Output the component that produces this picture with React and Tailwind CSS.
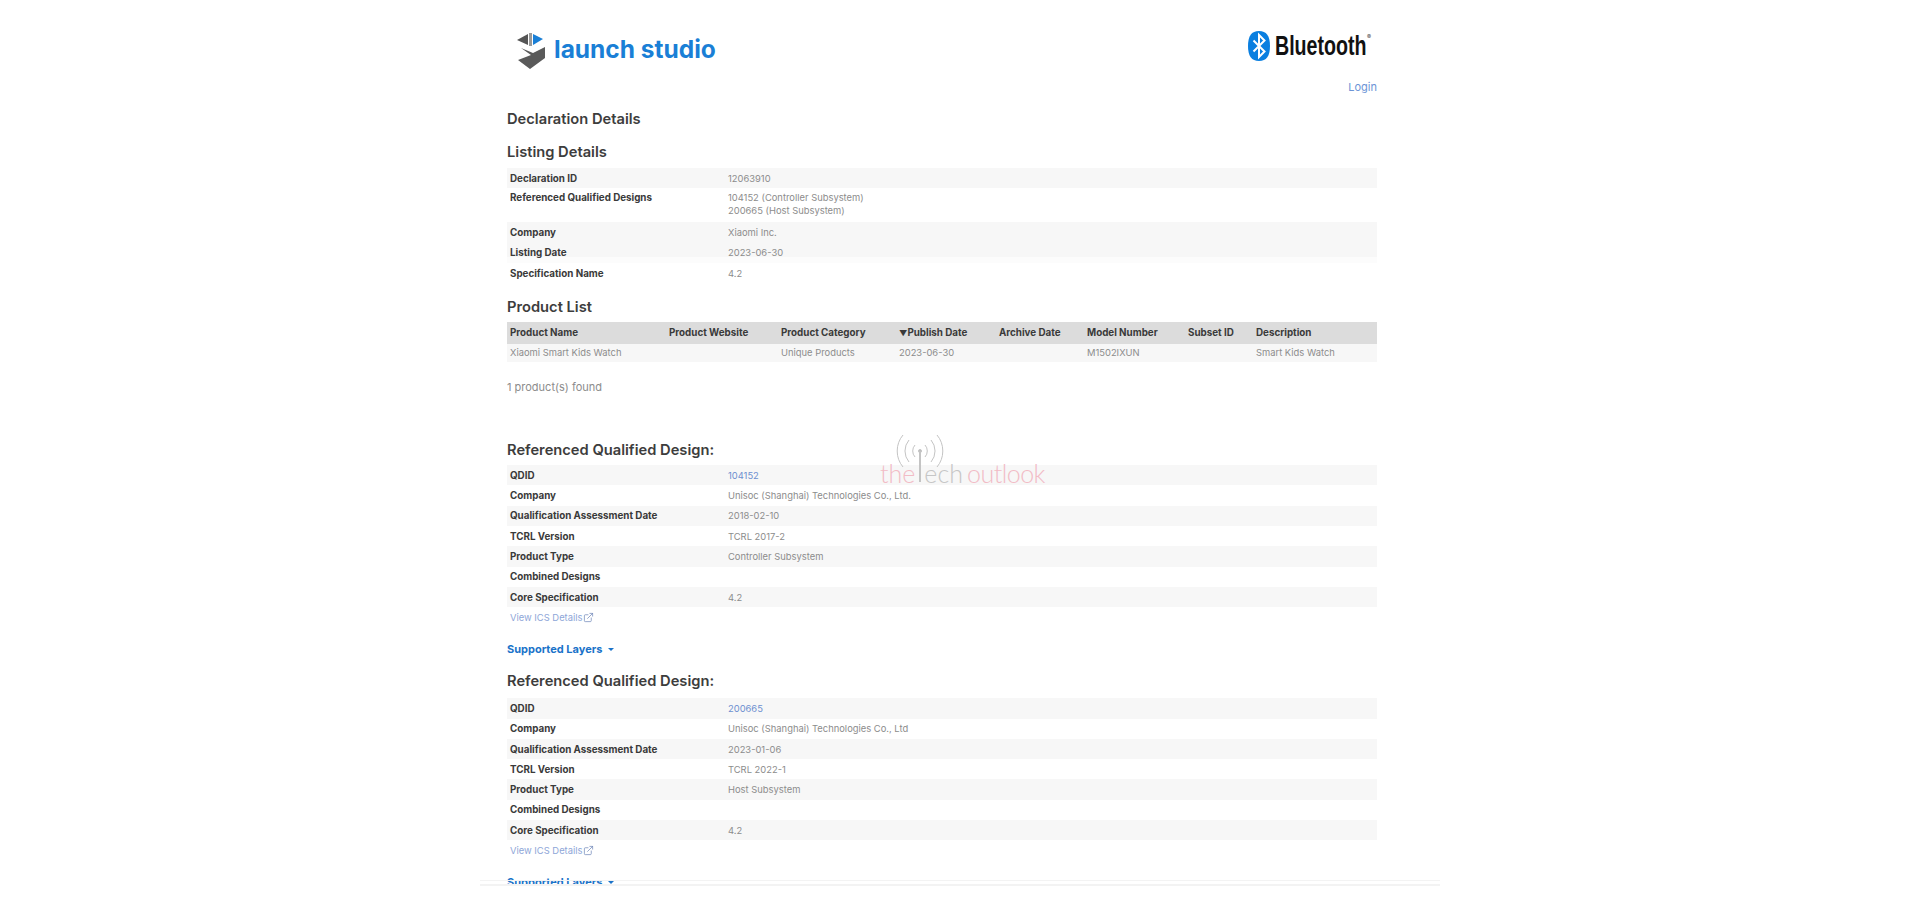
import { ExternalLink } from "lucide-react";

const listing = [
  { label: "Declaration ID", value: "12063910", shade: true },
  {
    label: "Referenced Qualified Designs",
    value: "104152 (Controller Subsystem)",
    extra: "200665 (Host Subsystem)",
  },
  { label: "Company", value: "Xiaomi Inc.", shade: true },
  { label: "Listing Date", value: "2023-06-30", fade: true },
  { label: "Specification Name", value: "4.2" },
];

const designs = [
  {
    qdid: "104152",
    company: "Unisoc (Shanghai) Technologies Co., Ltd.",
    date: "2018-02-10",
    tcrl: "TCRL 2017-2",
    type: "Controller Subsystem",
    compact: true,
  },
  {
    qdid: "200665",
    company: "Unisoc (Shanghai) Technologies Co., Ltd",
    date: "2023-01-06",
    tcrl: "TCRL 2022-1",
    type: "Host Subsystem",
  },
];

const columns = [
  { name: "Product Name", width: "w-[159px]", value: "Xiaomi Smart Kids Watch" },
  { name: "Product Website", width: "w-[112px]", value: "" },
  { name: "Product Category", width: "w-[118px]", value: "Unique Products" },
  { name: "Publish Date", width: "w-[100px]", value: "2023-06-30", sorted: true },
  { name: "Archive Date", width: "w-[88px]", value: "" },
  { name: "Model Number", width: "w-[101px]", value: "M1502IXUN" },
  { name: "Subset ID", width: "w-[68px]", value: "" },
  { name: "Description", width: "flex-1", value: "Smart Kids Watch" },
];

function LaunchLogo() {
  return (
    <svg viewBox="0 0 29 37" className="h-[37px] w-[29px]">
      <polygon points="0,7 11,1 11,12" fill="#555555" />
      <rect x="12" y="0" width="3" height="13" fill="#9a9a9a" />
      <polygon points="16,1 26,6 16,12" fill="#1a7fd6" />
      <polygon
        points="4,15 16,20 28,14 28,25 13,36 1,27 14,22"
        fill="#5a5a5a"
      />
    </svg>
  );
}

function BluetoothLogo() {
  return (
    <svg viewBox="0 0 22 30" className="h-[30px] w-[22px]">
      <path
        d="M11 0C3.500 0 0 5 0 15s3.500 15 11 15 11-5 11-15S18.500 0 11 0z"
        fill="#0a7fe0"
      />
      <path
        d="M5.500 9.500l11 11-5.500 5.500V4l5.500 5.500-11 11"
        fill="none"
        stroke="#ffffff"
        strokeWidth="2"
      />
    </svg>
  );
}

function Row({ label, shade, fade, tall, children }) {
  return (
    <div
      className={`flex pl-[3px] ${
        tall ? "h-[34px] items-start pt-[3px]" : "h-[20.3px] items-center"
      } ${shade ? "bg-[#f7f7f7]" : ""} ${
        fade ? "bg-[linear-gradient(#f7f7f7_70%,#fcfcfc_70%)]" : ""
      }`}
    >
      <div className="w-[218px] text-[9.8px] leading-[13px] font-bold text-[#3a3a3a]">{label}</div>
      <div className="text-[9.4px] leading-[13px] text-[#8c8c8c]">{children}</div>
    </div>
  );
}

function Caret() {
  return (
    <span className="ml-[6px] inline-block border-x-[3px] border-t-[3px] border-x-transparent border-t-[#1a73c9] align-middle" />
  );
}

function Design({ design }) {
  return (
    <section className={design.compact ? "pb-[6px]" : "pb-[4px]"}>
      <h3
        className={`text-[14.7px] leading-[33px] font-semibold text-[#3d3d3d] ${
          design.compact ? "h-[31px]" : "h-[33px]"
        }`}
      >
        Referenced Qualified Design:
      </h3>
      <div>
        <Row label="QDID" shade>
          <span className="text-[#6d8fd0]">{design.qdid}</span>
        </Row>
        <Row label="Company">{design.company}</Row>
        <Row label="Qualification Assessment Date" shade>
          {design.date}
        </Row>
        <Row label="TCRL Version">{design.tcrl}</Row>
        <Row label="Product Type" shade>
          {design.type}
        </Row>
        <Row label="Combined Designs" />
        <Row label="Core Specification" shade>
          4.2
        </Row>
      </div>
      <a className="mt-[1px] flex h-[20px] items-center pl-[3px] text-[9.4px] text-[#8ea6d8]">
        View ICS Details
        <ExternalLink size={11} strokeWidth={1.6} className="-mt-[2px] ml-[1px] text-[#6f86b8]" />
      </a>
      <div className="mt-[11px] flex h-[20px] items-center text-[11px] font-bold text-[#1a73c9]">
        Supported Layers
        <Caret />
      </div>
    </section>
  );
}

export default function App() {
  return (
    <div className="h-[920px] overflow-hidden bg-white font-['Inter',sans-serif]">
      <main className="mx-auto h-[886px] w-[960px] overflow-hidden pr-[63px] pl-[27px]">
        <header className="relative h-[102px]">
          <div className="flex items-start justify-between">
            <div className="mt-[33px] ml-[10px] flex items-center gap-[8px]">
              <LaunchLogo />
              <span className="-mt-[4px] text-[24.5px] leading-none font-bold text-[#1a7fd6]">
                launch studio
              </span>
            </div>
            <div className="mt-[31px] mr-[9px] flex">
              <BluetoothLogo />
              <div className="relative w-[98px]">
                <span className="absolute top-[-2px] left-[5px] origin-left scale-x-[0.7] font-['Liberation_Sans',sans-serif] text-[28px] leading-[34px] font-bold whitespace-nowrap text-[#111]">
                  Bluetooth
                </span>
                <span className="absolute top-[3px] right-[-3px] text-[6px] leading-none text-[#444]">
                  ®
                </span>
              </div>
            </div>
          </div>
          <a className="absolute top-[79px] right-0 text-[11px] text-[#6d94d6]">Login</a>
        </header>

        <h2 className="h-[34px] text-[14.7px] leading-[34px] font-semibold text-[#3d3d3d]">
          Declaration Details
        </h2>
        <h3 className="h-[32px] text-[14.7px] leading-[32px] font-semibold text-[#3d3d3d]">
          Listing Details
        </h3>
        <div>
          {listing.map((row) => (
            <Row
              key={row.label}
              label={row.label}
              shade={row.shade}
              fade={row.fade}
              tall={Boolean(row.extra)}
            >
              <div>{row.value}</div>
              {row.extra && <div>{row.extra}</div>}
            </Row>
          ))}
        </div>

        <h3 className="mt-[12px] mb-[3px] h-[24px] text-[14.7px] leading-[24px] font-semibold text-[#3d3d3d]">
          Product List
        </h3>
        <div className="flex h-[22px] items-center bg-[#dcdcdc] pl-[3px] text-[9.8px] font-bold text-[#3a3a3a]">
          {columns.map((col) => (
            <div key={col.name} className={col.width}>
              {col.sorted && <span className="text-[8px]">▼</span>}
              {col.name}
            </div>
          ))}
        </div>
        <div className="flex h-[18px] items-center bg-[#f7f7f7] pl-[3px] text-[9.4px] text-[#8c8c8c]">
          {columns.map((col) => (
            <div key={col.name} className={col.width}>
              {col.value}
            </div>
          ))}
        </div>
        <p className="mt-[17px] text-[11px] leading-[16px] text-[#8c8c8c]">1 product(s) found</p>

        <div className="mt-[39px]">
          {designs.map((design) => (
            <Design key={design.qdid} design={design} />
          ))}
        </div>

        <div className="pointer-events-none absolute top-[430px] left-[880px] w-[170px] select-none">
          <svg viewBox="0 0 80 52" className="ml-[5px] h-[52px] w-[80px]" fill="none" stroke="#c4c4c4" strokeWidth="1">
            <circle cx="35" cy="21" r="1.500" fill="#bdbdbd" />
            <path d="M35 21V52" strokeWidth="2" />
            <path d="M30 27a9 9 0 0 1 0-12M40 15a9 9 0 0 1 0 12" />
            <path d="M24 32a17 17 0 0 1 0-22M46 10a17 17 0 0 1 0 22" />
            <path d="M18 37a25 25 0 0 1 0-32M52 5a25 25 0 0 1 0 32" />
          </svg>
          <div className="-mt-[22px] flex font-['Lato',sans-serif] text-[25px] leading-[26px] font-light">
            <span className="text-[#f2bcc6]">the</span>
            <span className="ml-[9px] text-[#c6c6c6]">ech</span>
            <span className="ml-[4px] tracking-[-0.5px] text-[#f2bcc6]">outlook</span>
          </div>
        </div>
      </main>
      <div className="relative mx-auto -mt-[6px] h-[6px] w-[960px] border-t border-b-2 border-[#f3f3f3]" />
    </div>
  );
}
